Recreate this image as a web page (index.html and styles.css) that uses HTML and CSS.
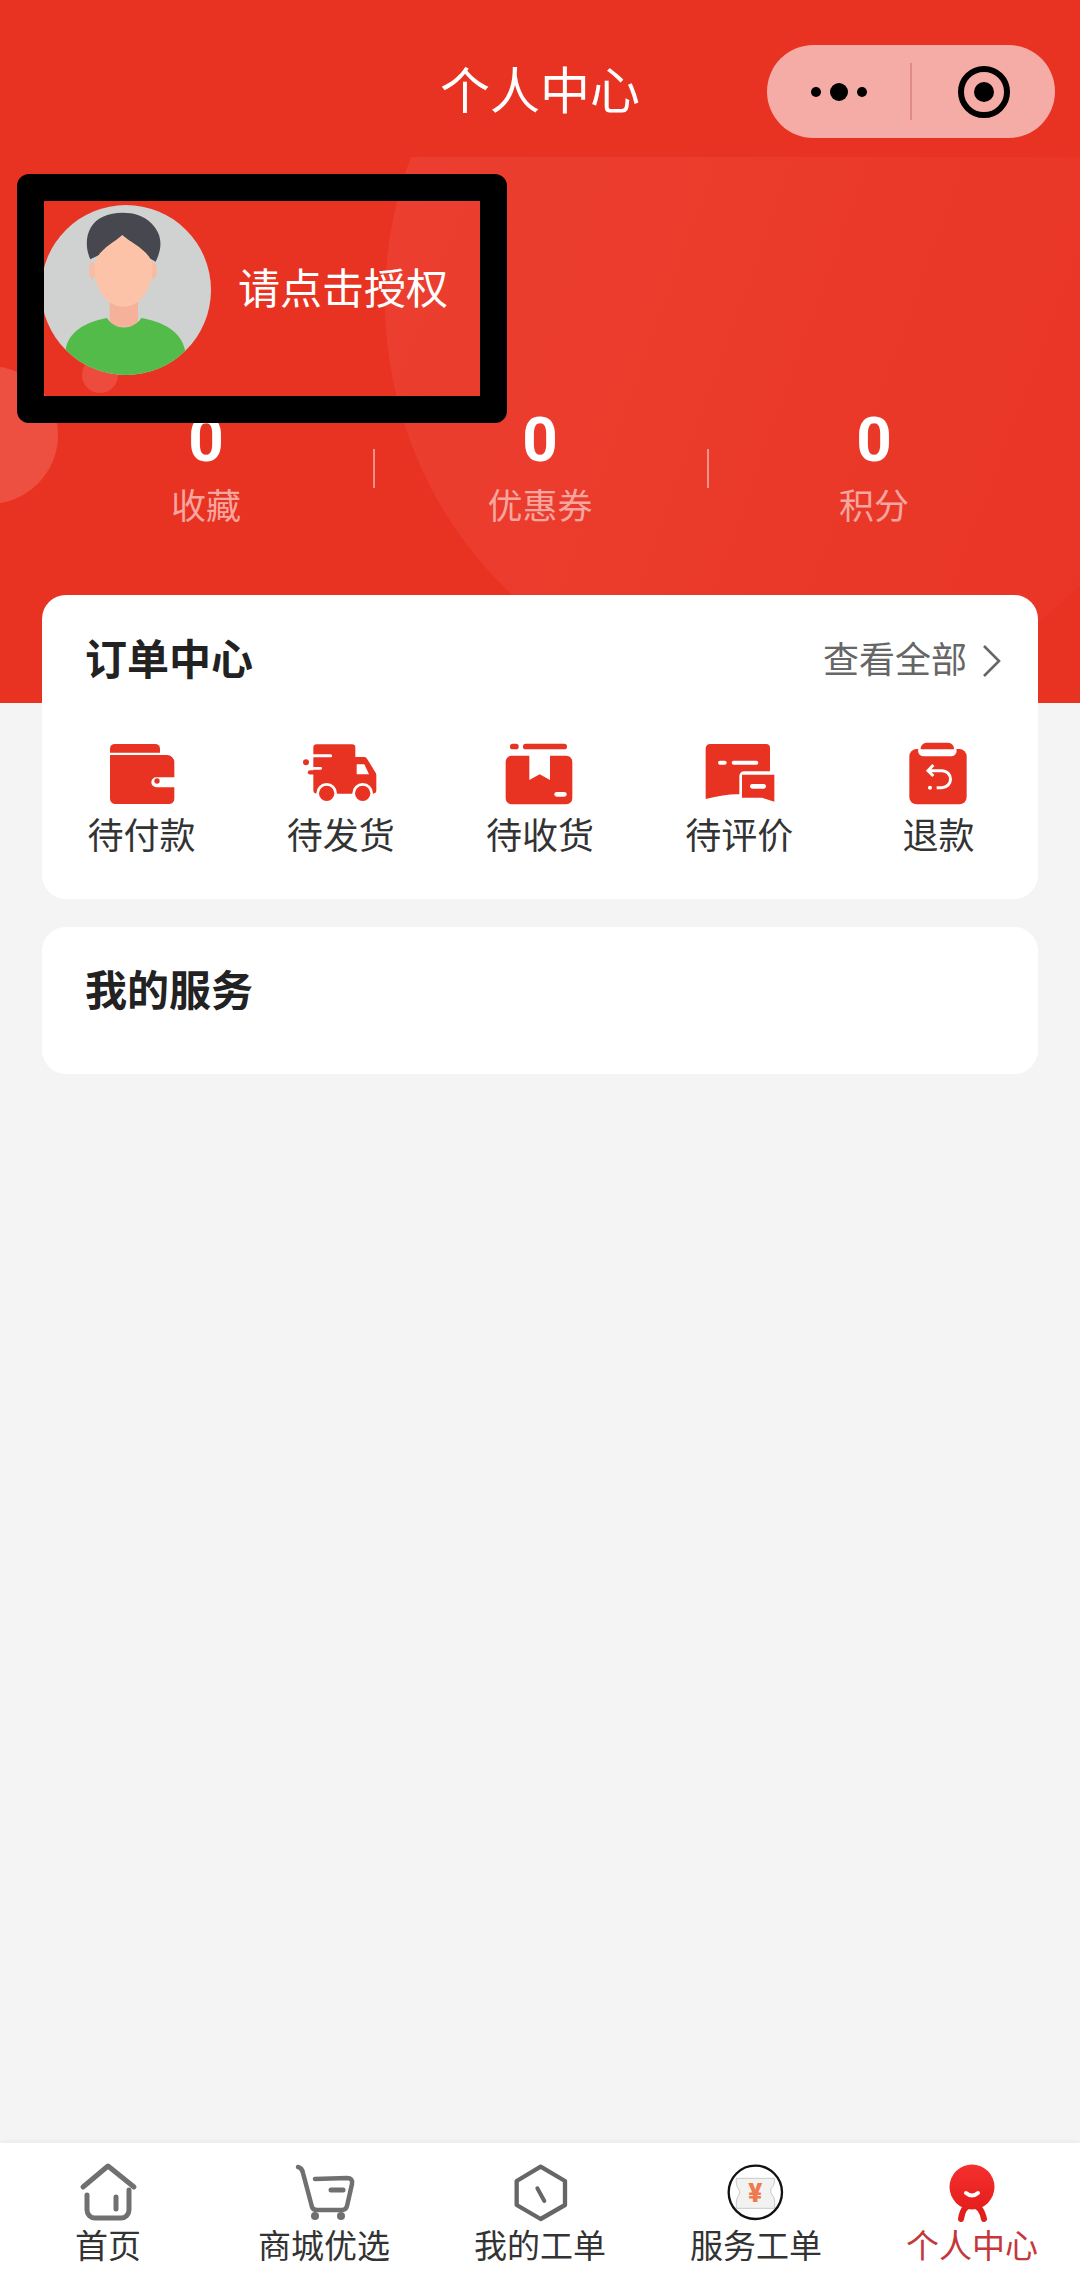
FILE: index.html
```html
<!DOCTYPE html>
<html lang="zh-CN">
<head>
  <meta charset="UTF-8" />
  <meta name="viewport" content="width=device-width, initial-scale=1.0"/>
  <title>个人中心</title>
  <link rel="stylesheet" href="styles.css">
</head>
<body>

  <section class="hero">
    <div class="hero-bg">
      <div class="blob-large"></div>
      <div class="blob-left"></div>
      <div class="blob-dot"></div>
    </div>

    <header class="nav">
      <h1 class="nav-title">个人中心</h1>
      <div class="capsule">
        <div class="capsule-more">
          <span class="dot"></span>
          <span class="dot dot-big"></span>
          <span class="dot"></span>
        </div>
        <div class="capsule-line"></div>
        <div class="capsule-target"><span></span></div>
      </div>
    </header>

    <div class="profile">
      <svg class="avatar" viewBox="124 135 510 510">
        <defs><clipPath id="avatarClip"><circle cx="379" cy="390" r="255"/></clipPath></defs>
        <g clip-path="url(#avatarClip)">
          <rect x="124" y="135" width="510" height="510" fill="#d0d2d2"/>
          <path d="M272 298C250 250 262 190 310 170C350 152 420 152 455 190C490 225 488 265 468 305L370 250Z" fill="#47474f"/>
          <ellipse cx="278" cy="332" rx="10" ry="26" fill="#f8bca3"/>
          <ellipse cx="462" cy="332" rx="10" ry="26" fill="#f8bca3"/>
          <rect x="330" y="400" width="85" height="100" fill="#f5b199"/>
          <path d="M285 320C285 275 340 250 368 225C395 250 458 275 458 320C458 390 420 440 372 440C322 440 285 390 285 320Z" fill="#fcc3a9"/>
          <path d="M198 570C205 515 260 485 322 474C345 512 400 512 425 474C490 485 545 515 556 570L556 660L198 660Z" fill="#52bb4a"/>
        </g>
      </svg>
      <div class="profile-name">请点击授权</div>
    </div>

    <div class="stats">
      <div class="stat"><div class="stat-num">0</div><div class="stat-label">收藏</div></div>
      <div class="stat"><div class="stat-num">0</div><div class="stat-label">优惠券</div></div>
      <div class="stat"><div class="stat-num">0</div><div class="stat-label">积分</div></div>
    </div>

    <!-- black box sits on top of the profile -->
    <div class="mask"></div>
  </section>

  <section class="card card-orders">
    <div class="card-head">
      <h2 class="card-title">订单中心</h2>
      <a class="more">查看全部
        <svg class="more-arrow" viewBox="0 0 20 34"><path d="M2 2L17 17L2 32" fill="none" stroke="#666" stroke-width="2.6"/></svg>
      </a>
    </div>
    <div class="orders">
      <div class="order">
        <svg class="order-icon" viewBox="168 105 270 225">
          <path d="M207 158V146a14 14 0 0 1 14-14H343a14 14 0 0 1 14 14V158Z" fill="#e83323"/>
          <path d="M207 165H378a22 22 0 0 1 22 22V232H346a15 15 0 0 0 0 30H400V296a16 16 0 0 1-16 16H223a16 16 0 0 1-16-16Z" fill="#e83323"/>
          <circle cx="348" cy="243" r="8" fill="#e83323"/>
        </svg>
        <div class="order-label">待付款</div>
      </div>
      <div class="order">
        <svg class="order-icon" viewBox="0 0 270 225">
          <path d="M62 28H168a10 10 0 0 1 10 10V66H205a10 10 0 0 1 8 5L238 112a14 14 0 0 1 3 8V166a10 10 0 0 1-10 10H62a10 10 0 0 1-10-10V38a10 10 0 0 1 10-10Z" fill="#e83323"/>
          <path d="M182 88H205L219 118H182Z" fill="#fff"/>
          <path d="M44 62H104" stroke="#fff" stroke-width="9" stroke-linecap="round"/>
          <path d="M44 100H74" stroke="#fff" stroke-width="8" stroke-linecap="round"/>
          <path d="M42 112H70" stroke="#e83323" stroke-width="13" stroke-linecap="round"/>
          <circle cx="30" cy="82" r="9" fill="#e83323"/>
          <circle cx="92" cy="175" r="31" fill="#fff"/>
          <circle cx="92" cy="175" r="23" fill="#e83323"/>
          <circle cx="200" cy="175" r="31" fill="#fff"/>
          <circle cx="200" cy="175" r="23" fill="#e83323"/>
        </svg>
        <div class="order-label">待发货</div>
      </div>
      <div class="order">
        <svg class="order-icon" viewBox="0 0 270 225">
          <rect x="45" y="26" width="26" height="17" rx="8" fill="#e83323"/>
          <rect x="84" y="26" width="132" height="17" rx="8" fill="#e83323"/>
          <path d="M50 62H103V135L134 118L165 135V62H214a18 18 0 0 1 18 18V190a18 18 0 0 1-18 18H50a18 18 0 0 1-18-18V80a18 18 0 0 1 18-18Z" fill="#e83323"/>
          <rect x="178" y="171" width="37" height="14" rx="7" fill="#fff"/>
        </svg>
        <div class="order-label">待收货</div>
      </div>
      <div class="order">
        <svg class="order-icon" viewBox="462 105 270 225">
          <path d="M510 132H678a12 12 0 0 1 12 12V214H612a14 14 0 0 0-14 14V283Q560 281 497 297V145a13 13 0 0 1 13-13Z" fill="#e83323"/>
          <path d="M606 224H703V305L666 293H606Z" fill="#e83323"/>
          <rect x="534" y="182" width="26" height="12" rx="6" fill="#fff"/>
          <rect x="575" y="182" width="80" height="12" rx="6" fill="#fff"/>
          <rect x="630" y="252" width="48" height="14" rx="7" fill="#fff"/>
        </svg>
        <div class="order-label">待评价</div>
      </div>
      <div class="order">
        <svg class="order-icon" viewBox="1059 105 270 225">
          <path d="M1130 147H1258a22 22 0 0 1 22 22V291a22 22 0 0 1-22 22H1130a22 22 0 0 1-22-22V169a22 22 0 0 1 22-22Z" fill="#e83323"/>
          <rect x="1134" y="135" width="116" height="34" rx="17" fill="#fff"/>
          <path d="M1142 148a18 18 0 0 1 18-20H1224a18 18 0 0 1 18 20Z" fill="#e83323"/>
          <path d="M1180 195L1164 212L1180 228M1166 212H1206a25 25 0 0 1 0 51H1190" fill="none" stroke="#fff" stroke-width="9"/>
          <circle cx="1170" cy="263" r="6" fill="#fff"/>
        </svg>
        <div class="order-label">退款</div>
      </div>
    </div>
  </section>

  <section class="card card-service">
    <h2 class="card-title">我的服务</h2>
  </section>

  <div class="spacer"></div>

  <nav class="tabbar">
    <div class="tab">
      <svg class="tab-icon" viewBox="0 0 90 75">
        <path d="M20 32L45 11L71 32M24 40V55a8 8 0 0 0 8 8H58a8 8 0 0 0 8-8V35M53 42V54" fill="none" stroke="#707070" stroke-width="5" stroke-linecap="round" stroke-linejoin="round"/>
      </svg>
      <div class="tab-label">首页</div>
    </div>
    <div class="tab">
      <svg class="tab-icon" viewBox="0 0 90 75">
        <path d="M19 12Q23 13 24 18L33 52Q34 55 38 55H63Q67 55 68 51L73 29Q74 23 68 23L36 24" fill="none" stroke="#707070" stroke-width="4.5" stroke-linecap="round" stroke-linejoin="round"/>
        <path d="M52 35H64" stroke="#707070" stroke-width="5" stroke-linecap="round"/>
        <circle cx="36" cy="61" r="4" fill="#707070"/>
        <circle cx="62" cy="61" r="4" fill="#707070"/>
      </svg>
      <div class="tab-label">商城优选</div>
    </div>
    <div class="tab">
      <svg class="tab-icon" viewBox="-15 0 270 225">
        <path d="M122 35L195 78V150L122 192L50 150V78Z" fill="none" stroke="#666" stroke-width="13" stroke-linejoin="round"/>
        <path d="M112 100L133 138" stroke="#666" stroke-width="12" stroke-linecap="round"/>
      </svg>
      <div class="tab-label">我的工单</div>
    </div>
    <div class="tab">
      <svg class="tab-icon" viewBox="-12 0 270 225">
        <circle cx="121" cy="112" r="80" fill="#fff" stroke="#111" stroke-width="7"/>
        <path d="M64 70H178Q180 92 168 100Q164 113 172 120Q182 130 178 160H64Q62 130 72 120Q78 110 70 100Q62 92 64 70Z" fill="#f2f2f0" stroke="#c9c9c9" stroke-width="3"/>
        <text class="ticket-mark" x="121" y="140" text-anchor="middle">¥</text>
      </svg>
      <div class="tab-label">服务工单</div>
    </div>
    <div class="tab tab-active">
      <svg class="tab-icon" viewBox="0 0 90 75">
        <defs><linearGradient id="headFill" x1="0" y1="0" x2="0" y2="1"><stop offset="0" stop-color="#f4302e"/><stop offset="1" stop-color="#e61e1c"/></linearGradient></defs>
        <path d="M34 64Q36 50 45 50Q54 50 57 64" fill="none" stroke="#e0201c" stroke-width="6" stroke-linecap="round"/>
        <circle cx="45" cy="32" r="22.5" fill="url(#headFill)"/>
        <path d="M39 38Q45 43 51 38" fill="none" stroke="#fff" stroke-width="4" stroke-linecap="round"/>
      </svg>
      <div class="tab-label">个人中心</div>
    </div>
  </nav>

</body>
</html>
```

FILE: styles.css
```css
* {
  box-sizing: border-box;
}
html, body {
  height: 100%;
}
body {
  margin: 0;
  display: flex;
  flex-direction: column;
  background: #f4f4f4;
  font-family: "Noto Sans CJK SC", "Noto Sans", sans-serif;
  color: #333;
}
h1, h2 {
  margin: 0;
  font-weight: normal;
}

/* red top part */
.hero {
  position: relative;
  height: 703px;
  flex-shrink: 0;
  background: #e83323;
}
.hero-bg {
  position: absolute;
  top: 157px;
  left: 0;
  right: 0;
  bottom: 0;
  overflow: hidden;
}
.blob-large {
  position: absolute;
  left: 385px;
  top: -263px;
  width: 812px;
  height: 812px;
  border-radius: 50%;
  background: linear-gradient(110deg, #ec4032, #ea3929 55%, #e93425);
}
.blob-left {
  position: absolute;
  left: -80px;
  top: 209px;
  width: 138px;
  height: 138px;
  border-radius: 50%;
  background: #ed4f41;
}
.blob-dot {
  position: absolute;
  left: 82px;
  top: 200px;
  width: 36px;
  height: 36px;
  border-radius: 50%;
  background: #ec4b3d;
}

.nav {
  position: relative;
  height: 180px;
  padding-bottom: 6px;
  display: flex;
  align-items: center;
  justify-content: center;
}
.nav-title {
  font-size: 50px;
  line-height: 60px;
  color: #fff;
}
.capsule {
  position: absolute;
  left: 767px;
  top: 45px;
  width: 288px;
  height: 93px;
  border-radius: 47px;
  background: #f6aca6;
  display: flex;
  align-items: center;
}
.capsule-more {
  width: 143px;
  display: flex;
  align-items: center;
  justify-content: center;
  gap: 9px;
}
.dot {
  width: 10px;
  height: 10px;
  border-radius: 50%;
  background: #000;
}
.dot-big {
  width: 18px;
  height: 18px;
}
.capsule-line {
  width: 2px;
  height: 57px;
  background: #e08b85;
}
.capsule-target {
  width: 143px;
  display: flex;
  justify-content: center;
}
.capsule-target span {
  width: 52px;
  height: 52px;
  border: 6px solid #000;
  border-radius: 50%;
  display: flex;
  align-items: center;
  justify-content: center;
}
.capsule-target span::after {
  content: "";
  width: 20px;
  height: 20px;
  border-radius: 50%;
  background: #000;
}

.profile {
  position: relative;
  margin-top: 25px;
  padding-left: 41px;
  display: flex;
  align-items: center;
  gap: 27px;
}
.avatar {
  width: 170px;
  height: 170px;
  display: block;
}
.profile-name {
  font-size: 42px;
  line-height: 60px;
  color: #fff;
  margin-top: -9px;
}

.stats {
  position: relative;
  margin-top: 33px;
  padding: 0 39px;
  display: grid;
  grid-template-columns: repeat(3, 1fr);
}
.stat {
  position: relative;
  text-align: center;
}
.stat + .stat::before {
  content: "";
  position: absolute;
  left: 0;
  top: 41px;
  width: 2px;
  height: 39px;
  background: rgba(255, 255, 255, 0.45);
}
.stat-num {
  font-family: "Roboto", sans-serif;
  font-size: 62px;
  line-height: 64px;
  font-weight: bold;
  color: #fff;
}
.stat-label {
  margin-top: 7px;
  font-size: 35px;
  line-height: 50px;
  color: #f6a69f;
}

/* redaction box over the profile row */
.mask {
  position: absolute;
  left: 17px;
  top: 174px;
  width: 490px;
  height: 249px;
  border: 27px solid #000;
  border-radius: 12px;
}

/* cards */
.card {
  position: relative;
  margin: 0 42px;
  background: #fff;
  border-radius: 24px;
  flex-shrink: 0;
}
.card-orders {
  margin-top: -108px;
  padding: 37px 0 43px;
}
.card-service {
  margin-top: 28px;
  padding: 36px 43px 61px;
}
.card-head {
  display: flex;
  align-items: center;
  justify-content: space-between;
  padding: 0 36px 0 43px;
}
.card-title {
  font-size: 42px;
  line-height: 50px;
  font-weight: bold;
  color: #222;
}
.more {
  display: flex;
  align-items: center;
  gap: 15px;
  font-size: 36px;
  line-height: 50px;
  color: #666;
}
.more-arrow {
  width: 20px;
  height: 34px;
  margin-top: 8px;
}
.orders {
  margin-top: 53px;
  display: grid;
  grid-template-columns: repeat(5, 1fr);
}
.order {
  display: flex;
  flex-direction: column;
  align-items: center;
}
.order-icon {
  width: 90px;
  height: 75px;
  display: block;
}
.order-label {
  font-size: 36px;
  line-height: 46px;
  color: #333;
}

.spacer {
  flex: 1;
}

/* bottom tabs */
.tabbar {
  height: 138px;
  flex-shrink: 0;
  padding-top: 12px;
  background: #fff;
  box-shadow: 0 -2px 4px rgba(0, 0, 0, 0.04);
  display: grid;
  grid-template-columns: repeat(5, 1fr);
}
.tab {
  display: flex;
  flex-direction: column;
  align-items: center;
}
.tab-icon {
  width: 90px;
  height: 75px;
  display: block;
}
.tab-label {
  font-size: 33px;
  line-height: 28px;
  color: #333;
}
.tab-active .tab-label {
  color: #c4383c;
}
.ticket-mark {
  font-family: "Roboto", sans-serif;
  font-size: 78px;
  font-weight: 900;
  fill: #ee7a50;
}
```
